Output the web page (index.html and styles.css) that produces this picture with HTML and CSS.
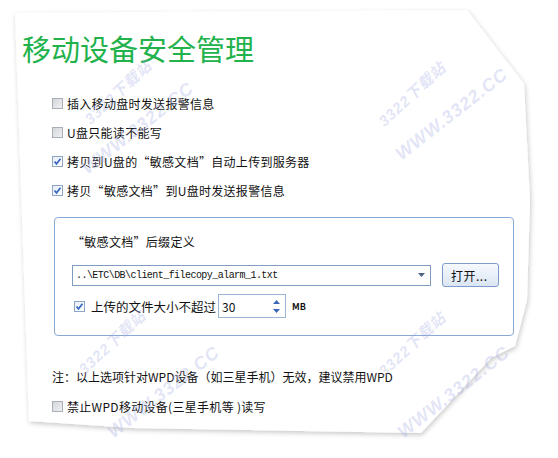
FILE: index.html
```html
<!DOCTYPE html>
<html lang="zh-CN">
<head>
    <meta charset="utf-8">
    <title>移动设备安全管理</title>
    <link rel="stylesheet" href="styles.css">
</head>
<body>
    <div class="sheet">
        <svg class="paper" width="558" height="458" viewBox="0 0 558 458">
            <defs>
                <filter id="shade" x="-10%" y="-10%" width="120%" height="120%">
                    <feDropShadow dx="1" dy="2" stdDeviation="2.5" flood-color="#000" flood-opacity="0.22"/>
                </filter>
            </defs>
            <polygon points="15,13 467,10 524,84 530,200 527,300 515,346 491,358 421,433 133,428 29,421" fill="#fff" filter="url(#shade)"/>
        </svg>

        <div class="content">
            <h1 class="title">移动设备安全管理</h1>

            <ul class="options">
                <li class="option"><span class="box"></span>插入移动盘时发送报警信息</li>
                <li class="option"><span class="box"></span>U盘只能读不能写</li>
                <li class="option"><span class="box checked"><svg width="9" height="9" viewBox="0 0 9 9"><path d="M1.5 4.5 L3.5 6.8 L7.5 1.8" fill="none" stroke="#3567c4" stroke-width="1.7"/></svg></span>拷贝到U盘的“敏感文档”自动上传到服务器</li>
                <li class="option"><span class="box checked"><svg width="9" height="9" viewBox="0 0 9 9"><path d="M1.5 4.5 L3.5 6.8 L7.5 1.8" fill="none" stroke="#3567c4" stroke-width="1.7"/></svg></span>拷贝“敏感文档”到U盘时发送报警信息</li>
            </ul>

            <div class="group">
                <div class="group-label">“敏感文档”后缀定义</div>
                <div class="file-row">
                    <div class="combo">
                        <span class="combo-text">..\ETC\DB\client_filecopy_alarm_1.txt</span>
                        <svg class="combo-arrow" width="7" height="4" viewBox="0 0 7 4"><path d="M0 0 H7 L3.5 4 Z" fill="#4d6185"/></svg>
                    </div>
                    <button class="open-btn">打开...</button>
                </div>
                <div class="size-row">
                    <span class="box checked"><svg width="9" height="9" viewBox="0 0 9 9"><path d="M1.5 4.5 L3.5 6.8 L7.5 1.8" fill="none" stroke="#3567c4" stroke-width="1.7"/></svg></span>
                    <span class="size-label">上传的文件大小不超过</span>
                    <div class="spin">
                        <span class="spin-value">30</span>
                        <span class="spin-arrows">
                            <svg width="7" height="4" viewBox="0 0 7 4"><path d="M0 4 H7 L3.5 0 Z" fill="#3a66b8"/></svg>
                            <svg width="7" height="4" viewBox="0 0 7 4"><path d="M0 0 H7 L3.5 4 Z" fill="#3a66b8"/></svg>
                        </span>
                    </div>
                    <span class="unit">MB</span>
                </div>
            </div>

            <p class="note">注：以上选项针对WPD设备（如三星手机）无效，建议禁用WPD</p>

            <div class="option"><span class="box"></span>禁止WPD移动设备(三星手机等 )读写</div>
        </div>

        <div class="marks">
            <span class="mark site" style="left:86px; top:110px;">3322下载站</span>
            <span class="mark url" style="left:84px; top:160px;">WWW.3322.CC</span>
            <span class="mark site" style="left:380px; top:112px;">3322下载站</span>
            <span class="mark url" style="left:398px; top:146px;">WWW.3322.CC</span>
            <span class="mark site" style="left:80px; top:360px;">3322下载站</span>
            <span class="mark url" style="left:110px; top:424px;">WWW.3322.CC</span>
            <span class="mark site" style="left:380px; top:362px;">3322下载站</span>
            <span class="mark url" style="left:400px; top:424px;">WWW.3322.CC</span>
        </div>
    </div>
</body>
</html>
```

FILE: styles.css
```css
body {
    margin: 0;
    background: #fff;
    font-family: "Noto Sans CJK SC", "Liberation Sans", sans-serif;
    color: #111;
}

.sheet {
    position: relative;
    width: 558px;
    height: 458px;
    overflow: hidden;
}

.paper {
    position: absolute;
    left: 0;
    top: 0;
}

.content {
    position: relative;
}

.title {
    margin: 31px 0 0 22px;
    font-size: 29px;
    line-height: 34px;
    font-weight: 400;
    color: #22b24c;
}

.options {
    list-style: none;
    margin: 24px 0 0 0;
    padding: 0;
}

.option {
    display: flex;
    align-items: center;
    height: 29px;
    padding-left: 52px;
    font-size: 12px;
    letter-spacing: 0.3px;
}

.box {
    display: inline-flex;
    align-items: center;
    justify-content: center;
    width: 11px;
    height: 11px;
    box-sizing: border-box;
    margin-right: 4px;
    border: 1px solid #a9afb8;
    background: linear-gradient(135deg, #d4d6da, #eef0f2);
}

.box.checked {
    border-color: #8ea6c6;
    background: linear-gradient(135deg, #e9eef4, #fff);
}

.group {
    margin: 12px 0 0 54px;
    width: 460px;
    height: 119px;
    box-sizing: border-box;
    border: 1px solid #88a8d6;
    border-radius: 4px;
    padding: 14px 0 0 17px;
}

.group-label {
    font-size: 12px;
    line-height: 20px;
    letter-spacing: 0.3px;
}

.file-row {
    display: flex;
    align-items: center;
    gap: 11px;
    margin-top: 11px;
    height: 24px;
}

.combo {
    display: flex;
    align-items: center;
    justify-content: space-between;
    width: 359px;
    height: 21px;
    box-sizing: border-box;
    border: 1px solid #7f9dc3;
    padding: 0 5px 0 3px;
    background: #fff;
}

.combo-text {
    font-family: "Liberation Mono", monospace;
    font-size: 10px;
    letter-spacing: -0.55px;
}

.open-btn {
    width: 57px;
    height: 24px;
    padding: 0 0 0 8px;
    text-align: left;
    border: 1px solid #7c9ccc;
    border-radius: 3px;
    background: linear-gradient(#f6f9fd, #dbe6f3);
    font-family: "Noto Sans CJK SC", sans-serif;
    font-size: 12px;
    letter-spacing: 0.5px;
    color: #111;
}

.size-row {
    display: flex;
    align-items: center;
    margin-top: 7px;
    height: 24px;
    padding-left: 2px;
}

.size-row .box {
    margin-right: 6px;
}

.size-label {
    font-size: 12.5px;
    margin-right: 2px;
}

.spin {
    display: flex;
    align-items: center;
    justify-content: space-between;
    width: 68px;
    height: 24px;
    box-sizing: border-box;
    border: 1px solid #9bb6d8;
    padding: 0 5px 0 3px;
    background: #fff;
}

.spin-value {
    font-size: 12px;
}

.spin-arrows {
    display: flex;
    flex-direction: column;
    gap: 5px;
}

.spin-arrows svg {
    display: block;
}

.unit {
    margin-left: 6px;
    font-size: 9px;
    font-weight: 700;
}

.note {
    margin: 31px 0 5px 52px;
    font-size: 12px;
    line-height: 20px;
    letter-spacing: 0;
}

.marks {
    position: absolute;
    left: 0;
    top: 0;
    width: 558px;
    height: 458px;
    pointer-events: none;
}

.mark {
    position: absolute;
    font-family: "Liberation Sans", "Noto Sans CJK SC", sans-serif;
    font-weight: 700;
    font-style: italic;
    color: rgba(165, 172, 228, 0.32);
    white-space: nowrap;
    transform-origin: left center;
}

.mark.site {
    font-size: 15px;
    letter-spacing: 1px;
    transform: rotate(-43deg);
}

.mark.url {
    font-size: 18px;
    letter-spacing: 1px;
    transform: rotate(-38deg);
}
```
